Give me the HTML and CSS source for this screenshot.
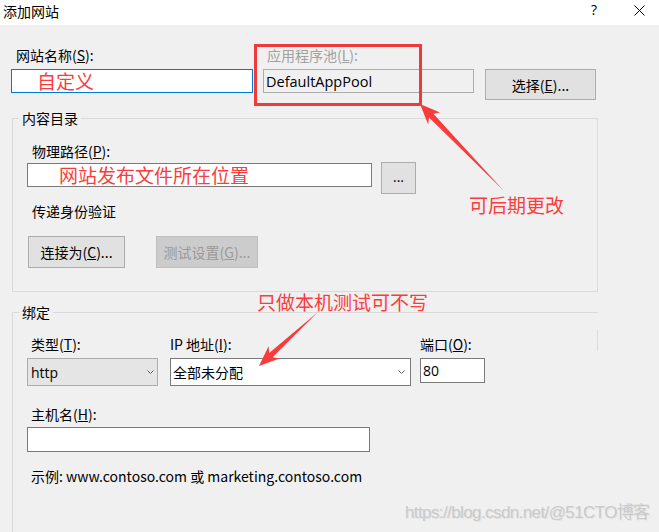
FILE: index.html
```html
<!DOCTYPE html>
<html lang="zh-CN">
<head>
<meta charset="utf-8">
<title>添加网站</title>
<link rel="stylesheet" href="styles.css">
</head>
<body>
<div class="titlebar">
  <span class="title">添加网站</span>
  <span class="tb-help">?</span>
  <svg class="tb-close" width="11" height="11" viewBox="0 0 11 11"><path d="M0.5 0.5 L10.5 10.5 M10.5 0.5 L0.5 10.5" stroke="#000" stroke-width="1" fill="none"/></svg>
</div>

<div class="main">
  <div class="row-top">
    <div class="field-name">
      <label class="lbl">网站名称(<u>S</u>):</label>
      <div class="textbox focus"><span class="note-in note-name">自定义</span></div>
    </div>
    <div class="field-pool">
      <label class="lbl disabled">应用程序池(<u>L</u>):</label>
      <div class="textbox readonly">DefaultAppPool</div>
    </div>
    <button class="btn btn-select">选择(<u>E</u>)...</button>
  </div>

  <fieldset class="group group-content">
    <legend>内容目录</legend>
    <div class="grp-body body-content">
      <label class="lbl">物理路径(<u>P</u>):</label>
      <div class="path-row">
        <div class="textbox path"><span class="note-in note-path">网站发布文件所在位置</span></div>
        <button class="btn btn-browse">...</button>
      </div>
      <div class="lbl auth-lbl">传递身份验证</div>
      <div class="auth-row">
        <button class="btn btn-connect">连接为(<u>C</u>)...</button>
        <button class="btn btn-test" disabled>测试设置(<u>G</u>)...</button>
      </div>
    </div>
  </fieldset>

  <fieldset class="group group-binding">
    <legend>绑定</legend>
    <div class="grp-body body-binding">
      <div class="bind-row">
        <div class="col-type">
          <label class="lbl">类型(<u>T</u>):</label>
          <div class="select sel-type"><span>http</span>
            <svg width="7" height="4" viewBox="0 0 7 4"><path d="M0.5 0.5 L3.5 3.5 L6.5 0.5" stroke="#606060" stroke-width="1" fill="none"/></svg>
          </div>
        </div>
        <div class="col-ip">
          <label class="lbl">IP 地址(<u>I</u>):</label>
          <div class="select sel-ip"><span>全部未分配</span>
            <svg width="7" height="4" viewBox="0 0 7 4"><path d="M0.5 0.5 L3.5 3.5 L6.5 0.5" stroke="#606060" stroke-width="1" fill="none"/></svg>
          </div>
        </div>
        <div class="col-port">
          <label class="lbl">端口(<u>O</u>):</label>
          <div class="textbox port">80</div>
        </div>
      </div>
      <label class="lbl host-lbl">主机名(<u>H</u>):</label>
      <div class="textbox host"></div>
      <div class="lbl example">示例: www.contoso.com 或 marketing.contoso.com</div>
    </div>
  </fieldset>
</div>

<div class="red-box"></div>
<svg class="arrows" width="659" height="532" viewBox="0 0 659 532">
  <polygon points="420,104 440,112.5 433.4,113.8 504,191 429,117.6 428.2,124.5" fill="#f83b3b"/>
  <polygon points="259,366 268.6,346.3 269.2,353 318,312 272.6,357.3 279.4,358.6" fill="#f83b3b"/>
</svg>
<div class="note note-later">可后期更改</div>
<div class="note note-local">只做本机测试可不写</div>
<div class="watermark">https://blog.csdn.net/@51CTO博客</div>
</body>
</html>
```

FILE: styles.css
```css
* { box-sizing: border-box; }

html, body {
  margin: 0;
  padding: 0;
}

body {
  width: 659px;
  height: 532px;
  overflow: hidden;
  position: relative;
  background: #f0f0f0;
  font-family: "Noto Sans CJK SC", "Noto Sans", sans-serif;
  font-size: 14px;
  color: #000;
}

u { text-decoration: underline; text-underline-offset: 1px; }

/* title bar */
.titlebar {
  height: 25px;
  background: #fff;
  display: flex;
  align-items: flex-start;
}
.title {
  margin-left: 3px;
  line-height: 22px;
}
.tb-help {
  margin-left: auto;
  line-height: 20px;
  font-family: "Open Sans", sans-serif;
  font-size: 14px;
}
.tb-close {
  margin: 5px 14px 0 37px;
}

/* main */
.main {
  padding: 21px 0 0 11px;
}

.lbl {
  display: block;
  height: 18px;
  line-height: 18px;
  white-space: nowrap;
}
.lbl.disabled { color: #a0a0a0; }

.textbox {
  background: #fff;
  border: 1px solid #7a7a7a;
  display: flex;
  align-items: center;
  white-space: nowrap;
}
.textbox.focus { border-color: #0078d7; }

.row-top {
  display: flex;
  align-items: flex-start;
}
.field-name { width: 242px; }
.field-name .lbl { padding-left: 5px; }
.field-name .textbox { margin-top: 5px; height: 24px; }

.field-pool { width: 211px; margin-left: 10px; }
.field-pool .lbl { padding-left: 4px; }
.textbox.readonly {
  margin-top: 5px;
  height: 24px;
  background: #f0f0f0;
  border-color: #adadad;
  padding-left: 2px;
  font-family: "Open Sans", "Noto Sans CJK SC", sans-serif;
  font-size: 14.5px;
}

.btn {
  font-family: inherit;
  font-size: 14px;
  color: #000;
  background: #e1e1e1;
  border: 1px solid #adadad;
  padding: 0;
  display: flex;
  align-items: center;
  justify-content: center;
  white-space: nowrap;
}
.btn:disabled {
  background: #cccccc;
  border-color: #bfbfbf;
  color: #9a9a9a;
}

.btn-select {
  margin-left: 11px;
  margin-top: 23px;
  width: 111px;
  height: 31px;
}

/* red in-field notes */
.note-in {
  color: #fb3c3c;
  font-size: 19px;
  line-height: 22px;
}
.note-name { padding-left: 25px; }
.note-path { padding-left: 31px; }

/* groups */
.group {
  margin: 0;
  padding: 0;
  border: 1px solid #dadada;
  width: 586px;
  margin-left: 1px;
  min-width: 0;
}
.group legend {
  padding: 0 3px;
  margin-left: 6px;
  line-height: 18px;
  height: 18px;
}

.group-content {
  margin-top: 9px;
}
.grp-body {
  padding-left: 14px;
}
.grp-body .lbl { padding-left: 5px; }

.body-content {
  padding-top: 15px;
  padding-bottom: 23px;
}
.path-row {
  display: flex;
  align-items: flex-start;
  margin-top: 2px;
}
.textbox.path {
  margin-top: 1px;
  width: 345px;
  height: 24px;
}
.btn-browse {
  margin-left: 9px;
  width: 35px;
  height: 32px;
  font-family: "Open Sans", sans-serif;
  padding-bottom: 4px;
}
.auth-lbl { margin-top: 8px; }
.auth-row {
  display: flex;
  margin-top: 16px;
}
.btn-connect {
  margin-left: 1px;
  width: 97px;
  height: 32px;
}
.btn-test {
  margin-left: 31px;
  width: 102px;
  height: 32px;
}

/* binding group */
.group-binding {
  margin-top: 11px;
  height: 250px;
  border-right: none;
  border-bottom: none;
  position: relative;
}
.group-binding::after {
  content: "";
  position: absolute;
  right: 0;
  top: 9px;
  width: 1px;
  height: 21px;
  background: #dadada;
}
.body-binding {
  padding-top: 14px;
}
.bind-row {
  display: flex;
  align-items: flex-start;
}
.col-type { width: 131px; }
.col-ip { width: 241px; margin-left: 12px; }
.col-port { width: 65px; margin-left: 9px; }
.col-ip .lbl, .col-port .lbl { padding-left: 0; }
.col-type .lbl { padding-left: 4px; }

.select {
  margin-top: 5px;
  height: 28px;
  display: flex;
  align-items: center;
  justify-content: space-between;
  white-space: nowrap;
}
.select svg { flex: none; }
.sel-type {
  background: #e5e5e5;
  border: 1px solid #acacac;
  padding: 0 3px 0 3px;
  font-family: "Open Sans", sans-serif;
}
.sel-ip {
  background: #fff;
  border: 1px solid #7a7a7a;
  padding: 0 5px 0 2px;
}
.textbox.port {
  margin-top: 5px;
  height: 25px;
  padding-left: 2px;
  font-family: "Open Sans", sans-serif;
}

.host-lbl { margin-top: 19px; }
.grp-body .host-lbl, .grp-body .example { padding-left: 4px; }
.textbox.host {
  margin-top: 4px;
  width: 343px;
  height: 25px;
}
.example { margin-top: 15px; }

/* annotations overlay */
.red-box {
  position: absolute;
  left: 254px;
  top: 44px;
  width: 168px;
  height: 62px;
  border: 3px solid #f03a3a;
}
.arrows {
  position: absolute;
  left: 0;
  top: 0;
  pointer-events: none;
}
.note {
  position: absolute;
  color: #fb3c3c;
  font-size: 19px;
  line-height: 19px;
  white-space: nowrap;
}
.note-later { left: 469px; top: 195px; }
.note-local { left: 257px; top: 292px; }

.watermark {
  position: absolute;
  left: 405px;
  top: 503px;
  font-family: "Liberation Sans", sans-serif;
  font-size: 17px;
  line-height: 20px;
  letter-spacing: -0.6px;
  color: #cacaca;
  text-shadow: 1px 1px 0 #e4e4e4;
  white-space: nowrap;
}
```
